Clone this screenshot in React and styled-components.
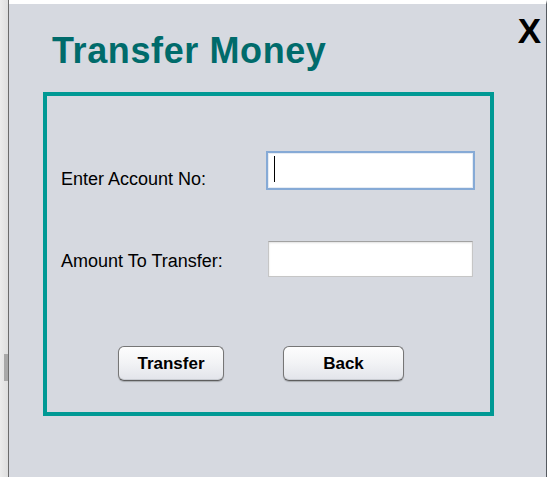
import React from 'react';
import styled, { createGlobalStyle } from 'styled-components';

const GlobalStyle = createGlobalStyle`
  html, body {
    margin: 0;
    padding: 0;
    background: #d6d9e0;
  }
  body {
    font-family: "Liberation Sans", Arial, sans-serif;
  }
`;

const Frame = styled.div`
  display: flex;
  width: 547px;
  height: 477px;
  overflow: hidden;
`;

const LeftEdge = styled.div`
  width: 8px;
  flex: none;
  display: flex;
  flex-direction: column;
  align-items: flex-end;
  background: linear-gradient(to right, #ececec, #dedede);
  border-right: 1px solid #6c6c6c;
`;

const Thumb = styled.div`
  width: 4px;
  height: 27px;
  margin-top: 354px;
  background: #a9a9a9;
`;

const Main = styled.div`
  flex: 1;
  display: flex;
  flex-direction: column;
  background: #d6d9e0;
  border-top: 4px solid #ffffff;
  border-right: 1px solid #555a60;
`;

const Header = styled.div`
  display: flex;
  justify-content: space-between;
  align-items: flex-start;
  padding: 0 5px 0 43px;
`;

const Title = styled.h1`
  margin: 29px 0 0;
  font-size: 36px;
  line-height: 36px;
  font-weight: bold;
  letter-spacing: 0.6px;
  color: #006b6b;
`;

const Close = styled.div`
  margin-top: 9px;
  font-size: 35px;
  line-height: 35px;
  font-weight: bold;
  color: #000;
  cursor: pointer;
`;

const Box = styled.div`
  box-sizing: border-box;
  width: 451px;
  height: 324px;
  margin: 23px 0 0 34px;
  padding: 55px 0 0 14px;
  border: 4px solid #009994;
  display: flex;
  flex-direction: column;
`;

const Row = styled.div`
  display: flex;
  align-items: flex-start;
  margin-top: ${p => p.$gap || 0}px;
`;

const Label = styled.label`
  width: 205px;
  flex: none;
  margin-top: ${p => p.$offset}px;
  font-size: 18px;
  line-height: 20px;
  color: #000;
`;

const Field = styled.div`
  box-sizing: border-box;
  display: flex;
  align-items: flex-start;
  width: ${p => p.$w}px;
  height: ${p => p.$h}px;
  margin-left: ${p => p.$shift || 0}px;
  background: #fff;
  border: ${p => (p.$focused ? '2px solid #86aad6' : '1px solid #c6c6c6')};
  border-top-color: ${p => (p.$focused ? '#86aad6' : '#a2a2a2')};
  box-shadow: ${p =>
    p.$focused ? 'inset 0 0 0 1px #e6ecf4' : 'inset 0 1px 2px rgba(0,0,0,0.12)'};
`;

const Caret = styled.span`
  width: 1px;
  height: 26px;
  margin: 3px 0 0 6px;
  background: #000;
`;

const Buttons = styled.div`
  display: flex;
  gap: 59px;
  margin: 69px 0 0 57px;
`;

const Button = styled.button`
  box-sizing: border-box;
  width: ${p => p.$w}px;
  height: 35px;
  padding: 0;
  border: 1px solid #767676;
  border-bottom-color: #5e5e5e;
  border-radius: 6px;
  background: linear-gradient(to bottom, #fdfdfd 0%, #f3f4f6 45%, #e2e4ea 100%);
  box-shadow: inset 0 -1px 0 #c9ccd2, 0 1px 1px #a8abb0;
  font-family: "Liberation Sans", Arial, sans-serif;
  font-size: 17px;
  font-weight: bold;
  color: #000;
  cursor: pointer;
`;

export default function App() {
  return (
    <>
      <GlobalStyle />
      <Frame>
        <LeftEdge>
          <Thumb />
        </LeftEdge>
        <Main>
          <Header>
            <Title>Transfer Money</Title>
            <Close>X</Close>
          </Header>
          <Box>
            <Row>
              <Label $offset={18}>Enter Account No:</Label>
              <Field $w={209} $h={39} $focused role="textbox">
                <Caret />
              </Field>
            </Row>
            <Row $gap={51}>
              <Label $offset={10}>Amount To Transfer:</Label>
              <Field $w={205} $h={36} $shift={2} role="textbox" />
            </Row>
            <Buttons>
              <Button $w={106}>Transfer</Button>
              <Button $w={121}>Back</Button>
            </Buttons>
          </Box>
        </Main>
      </Frame>
    </>
  );
}
